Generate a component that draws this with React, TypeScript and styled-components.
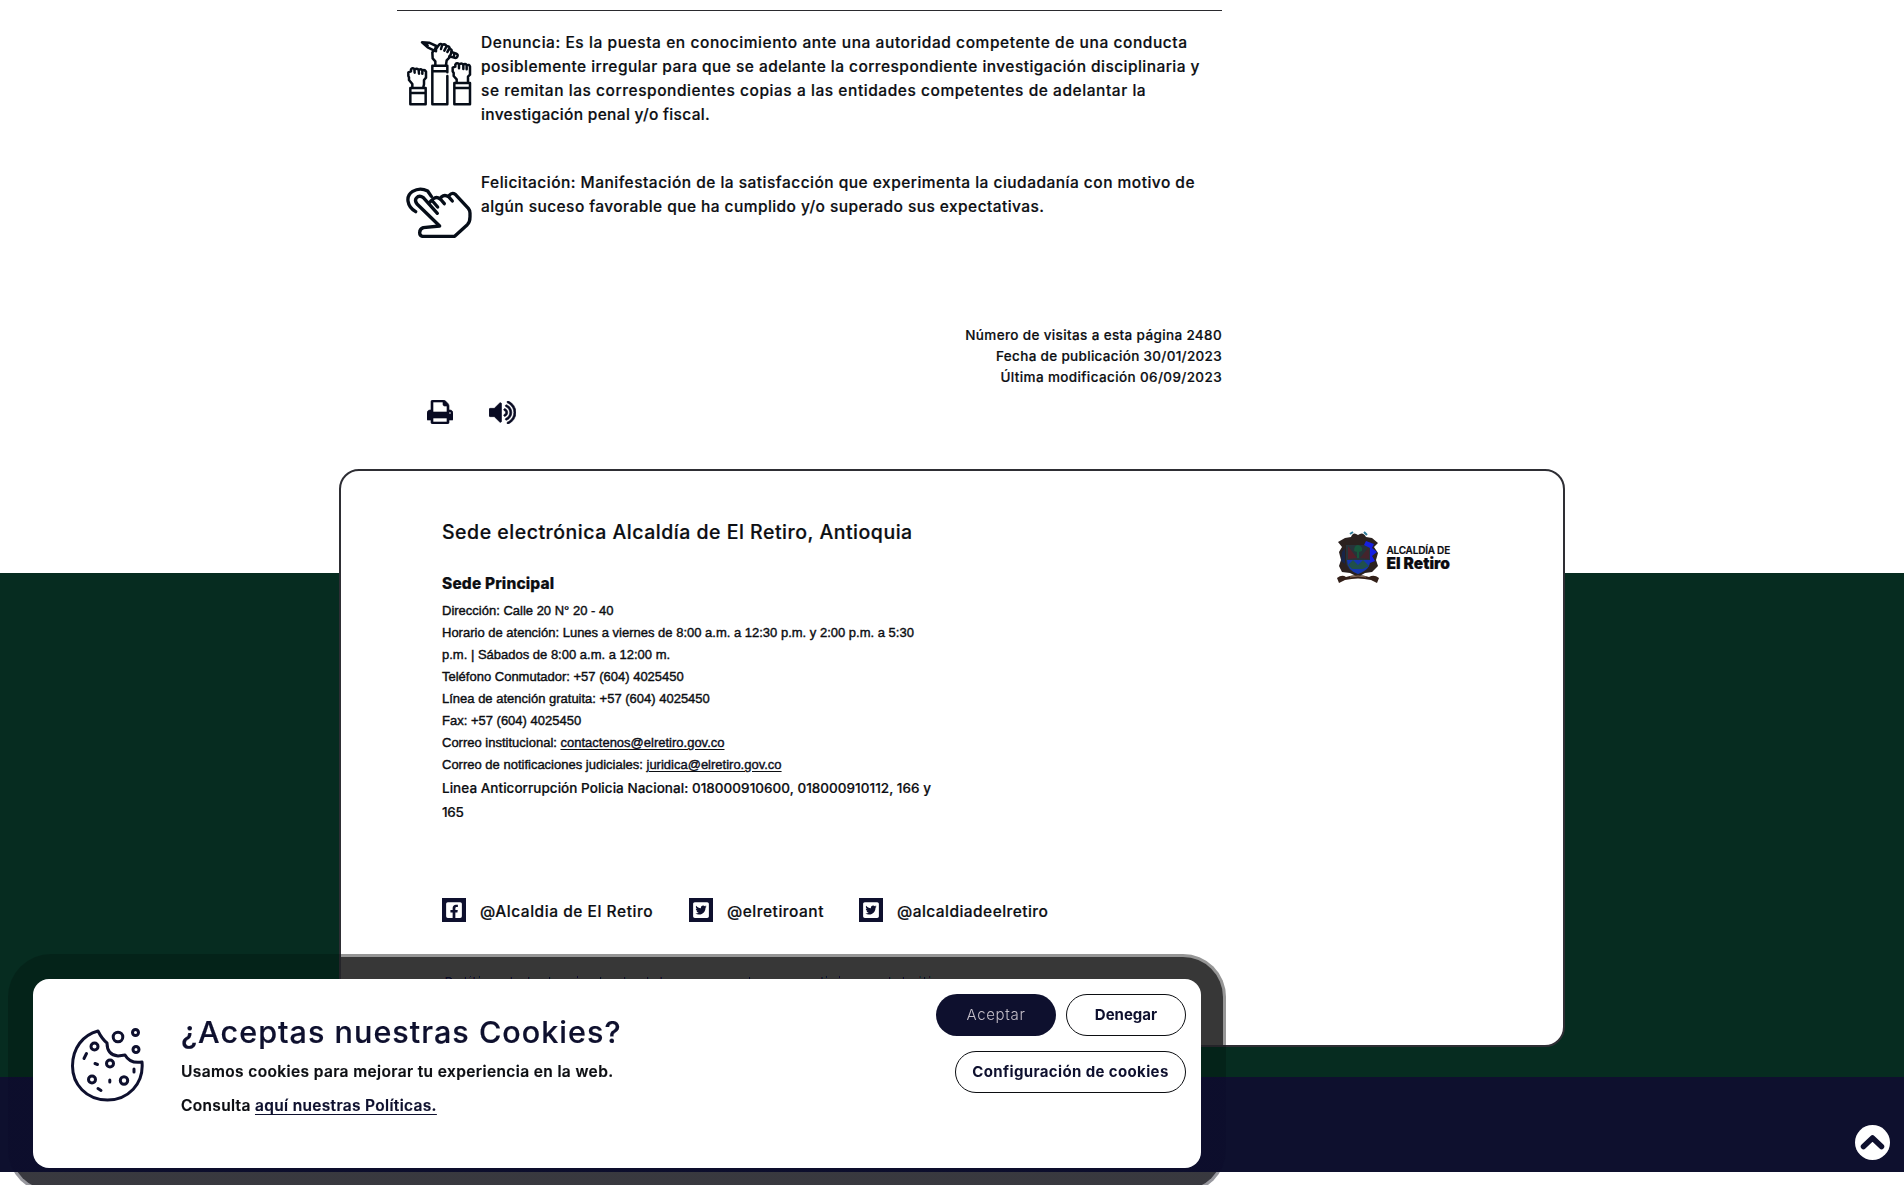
import React from "react";
import styled, { createGlobalStyle } from "styled-components";
import { FaFacebookSquare, FaTwitterSquare } from "react-icons/fa";

const navy = "#0e102e";
const ink = "#0c0e12";
const green = "#062c20";

const GlobalStyle = createGlobalStyle`
  *, *::before, *::after { box-sizing: border-box; }
  body {
    margin: 0;
    background: #fff;
    color: ${ink};
    font-family: Inter, "Liberation Sans", sans-serif;
    overflow: hidden;
  }
`;

const Page = styled.div`
  display: flex;
  flex-direction: column;
  height: 1185px;
`;

const Content = styled.main`
  display: flex;
  flex-direction: column;
  width: 825px;
  height: 469px;
  margin-left: 397px;
  padding-top: 10px;
`;

const Line = styled.span<{ $track?: number }>`
  display: block;
  white-space: pre;
  letter-spacing: ${(p) => p.$track ?? 0}px;
  -webkit-text-stroke: 0.2px currentColor;
`;

const Definition = styled.section<{ $gap: number }>`
  display: grid;
  grid-template-columns: 84px 1fr;
  margin-top: ${(p) => p.$gap}px;
`;

const Rule = styled.hr`
  width: 100%;
  height: 1px;
  flex: none;
  margin: 0;
  border: 0;
  background: #2a2a2e;
`;

const DefinitionText = styled.p`
  margin: 0;
  font-size: 15.5px;
  font-weight: 500;
  line-height: 24px;
`;

const HandsIcon = styled.svg`
  width: 80px;
  height: 84px;
  margin: -1px 0 0 3px;
  fill: none;
  stroke: #060d18;
  stroke-width: 7.5;
  stroke-linejoin: round;
  stroke-linecap: round;
`;

const TapIcon = styled(HandsIcon)`
  width: 68px;
  height: 53px;
  margin: 15px 0 0 8px;
  stroke-width: 10;
`;

const Meta = styled.div`
  margin-top: 86px;
  font-size: 13.5px;
  font-weight: 500;
  line-height: 21px;
  text-align: right;
`;

const Tools = styled.div`
  display: flex;
  align-items: center;
  gap: 36px;
  margin: 12px 0 0 30px;
  height: 24px;
  color: #080a22;

  svg {
    stroke: currentColor;
    stroke-width: 40;
  }
`;

const Footer = styled.footer`
  display: flex;
  flex-direction: column;
  height: 703px;
  background: linear-gradient(#fff 104px, ${green} 104px 608px, ${navy} 608px);
`;

const Card = styled.section`
  display: flex;
  justify-content: space-between;
  width: 1226px;
  height: 578px;
  margin-left: 339px;
  padding: 46px 112px 0 101px;
  border: 2px solid #2e2e34;
  border-radius: 20px;
  background: #fff;
`;

const CardMain = styled.div`
  display: flex;
  flex-direction: column;
`;

const CardTitle = styled.h2`
  margin: 0;
  font-size: 19.5px;
  font-weight: 500;
  line-height: 30px;
`;

const Branch = styled.h3`
  margin: 25px 0 4px;
  font-size: 15.5px;
  font-weight: 800;
  line-height: 24px;
`;

const Address = styled.address`
  font: 400 13px/22px "Liberation Sans", Arial, sans-serif;

  ${Line} {
    -webkit-text-stroke: 0.4px ${ink};
  }
`;

const MailLink = styled.a`
  color: ${navy};
  text-decoration: underline;
  text-underline-offset: 2px;
`;

const Hotline = styled.p`
  margin: 0;
  font-size: 13.5px;
  font-weight: 500;
  line-height: 24px;
`;

const SocialRow = styled.nav`
  display: grid;
  grid-template-columns: 247px 170px auto;
  margin-top: 74px;
`;

const SocialItem = styled.div`
  display: flex;
  align-items: center;
  gap: 14px;
  height: 24px;
  font-size: 15.5px;
  font-weight: 500;
  line-height: 20px;

  ${Line} {
    padding-top: 4px;
  }
`;

const SocialBadge = styled.span`
  display: flex;
  align-items: center;
  justify-content: center;
  width: 24px;
  height: 24px;
  background: ${navy};
  color: #fff;
`;

const PolicyLink = styled.p`
  margin: 51px 0 0 2px;
  font-size: 15px;
  font-weight: 600;
  line-height: 20px;
  color: ${navy};
`;

const Brand = styled.div`
  display: flex;
  align-items: flex-start;
  gap: 6px;
  height: 54px;
  margin: 13px 1px 0 0;
`;

const BrandName = styled.div`
  padding-top: 13px;
  color: #0b0b10;
`;

const BrandTop = styled(Line)`
  font-size: 10px;
  font-weight: 600;
  line-height: 14px;
`;

const BrandBottom = styled(Line)`
  margin-top: -3px;
  font-size: 15.5px;
  font-weight: 900;
  line-height: 19px;
`;

const Banner = styled.div`
  position: fixed;
  left: 33px;
  top: 979px;
  z-index: 3;
  display: flex;
  width: 1168px;
  height: 189px;
  padding: 15px 15px 0 38px;
  border-radius: 16px;
  background: #fff;
`;

const BannerShade = styled.div`
  position: fixed;
  left: 11px;
  top: 957px;
  z-index: 1;
  width: 1212px;
  height: 233px;
  border-radius: 40px;
  background: #454545;
  box-shadow: 0 0 0 3px #bcbcbc;
  mix-blend-mode: darken;
`;

const BannerTint = styled.div`
  position: fixed;
  left: 8px;
  top: 954px;
  z-index: 2;
  width: 1218px;
  height: 239px;
  border-radius: 43px;
  background: linear-gradient(rgba(0, 0, 0, 0.2) 123px, rgba(8, 8, 40, 0.2) 123px);
`;

const CookieIcon = styled.svg`
  flex: none;
  width: 76px;
  height: 76px;
  margin: 33px 36px 0 -2px;
  fill: none;
  stroke: ${navy};
  stroke-width: 3;
  stroke-linecap: round;
  stroke-linejoin: round;
`;

const BannerBody = styled.div`
  flex: 1;
  padding-top: 18px;
  font-size: 15.5px;
  font-weight: 600;
`;

const BannerTitle = styled.h2`
  margin: 0;
  color: ${navy};
  font-size: 30.5px;
  font-weight: 500;
  line-height: 40px;
`;

const BannerLine = styled.p<{ $gap: number }>`
  margin: ${(p) => p.$gap}px 0 0;
  line-height: 32px;
`;

const PolicyAnchor = styled.a`
  color: ${navy};
  text-decoration: underline;
  text-underline-offset: 3px;
`;

const Actions = styled.div`
  display: flex;
  flex-wrap: wrap;
  align-content: flex-start;
  justify-content: flex-end;
  gap: 15px 10px;
  width: 256px;
`;

const Pill = styled.button<{ $primary?: boolean; $width: number; $track: number }>`
  width: ${(p) => p.$width}px;
  height: 42px;
  padding: 0 0 1px;
  border: ${(p) => (p.$primary ? "0" : `1px solid ${ink}`)};
  border-radius: 21px;
  background: ${(p) => (p.$primary ? navy : "#fff")};
  color: ${(p) => (p.$primary ? "#c4bec8" : navy)};
  font-family: inherit;
  font-size: 15px;
  font-weight: ${(p) => (p.$primary ? 300 : 700)};
  letter-spacing: ${(p) => p.$track}px;
`;

const ScrollTop = styled.button`
  position: fixed;
  left: 1854.5px;
  top: 1124.5px;
  display: flex;
  align-items: center;
  justify-content: center;
  width: 35px;
  height: 35px;
  padding: 0;
  border: 0;
  border-radius: 50%;
  background: #fff;
`;

const Hands = () => (
  <HandsIcon viewBox="0 0 240 252">
    <path d="M31 174H77V223H31ZM31 189H77" />
    <path d="M37 172V162L27 150V142L25 138V127L33 124V118Q37 112 43 117L44 128M44 119Q51 113 56 120L57 131M57 120Q63 115 67 121V131M67 122Q74 118 78 125V143L72 150V163L70 172" />
    <path d="M97 107H142V127M142 138V223H97V107M97 124H142" />
    <path d="M106 105V94L98 85L97 67L103 61M108 64V57L116 46Q121 39 127 44L123 57M127 45Q134 40 140 48L133 62M140 50Q146 46 149 54L142 66M149 57Q158 58 154 68L148 83L140 91L138 105" />
    <path d="M66 37L87 38L109 48L103 62L83 52ZM69 39L83 46" />
    <path d="M154 66L169 71Q175 74 172 80Q169 86 162 83L148 79M163 72L161 81" />
    <path d="M163 159H210V223H163ZM163 174H210" />
    <path d="M170 157V148L161 138V129L158 124V113L166 110V104Q170 97 177 102V115M177 104Q184 97 190 104V117M190 105Q195 99 200 105V118M200 106Q208 102 210 110V134L204 140V157" />
  </HandsIcon>
);

const Tap = () => (
  <TapIcon viewBox="75 558 204 159">
    <path d="M107 635C80 619 76 588 98 574Q120 561 143 573L154 589" />
    <path d="M172 640L130 593Q118 584 109 594Q103 601 111 612L179 678L130 683Q119 687 119 698Q119 707 127 709H224L262 674Q270 666 270 650V639Q270 631 265 625L226 583Q216 576 208 586L205 590Q194 582 184 591L180 597Q170 588 160 596L150 606M160 606L173 621M181 597L193 611M205 589L217 603" />
  </TapIcon>
);

const Crest = () => (
  <svg width="44" height="54" viewBox="0 0 44 54">
    <path d="M15 7Q17 1 22 5Q27 1 30 7L36 8L42 13L38 17L42 23L40 30L42 36L36 42L29 43L22 47L14 43L6 42L3 36L5 30L3 22L6 17L2 12L9 8Z" fill="#2b211f" />
    <path d="M14 4L17 2M28 2L31 5" stroke="#2c7895" strokeWidth="2" />
    <path d="M10 15H34V31Q34 41 22 44Q10 40 10 31Z" fill="#26343a" />
    <path d="M12 16L21 28L12 29Z" fill="#54202a" />
    <path d="M24 28L33 17V29Z" fill="#44252c" />
    <path d="M22 15Q27 16 26 21L23 22V28H21V22L18 21Q18 15 22 15Z" fill="#17563c" />
    <path d="M11 30H34Q35 39 22 44Q11 40 11 30Z" fill="#1435b0" />
    <path d="M12 35L17 30L22 35L27 30L33 36L27 39H16Z" fill="#20504b" />
    <path d="M30 11L38 14L36 18L41 22L36 26L39 31L34 33V18L28 15Z" fill="#1620e0" />
    <path d="M6 22L9 18V34L5 31Z" fill="#172447" />
    <path d="M1 48Q6 44 10 47Q22 43 33 47Q38 44 43 48L41 53L35 50Q22 47 9 50L3 53Z" fill="#332019" />
    <path d="M14 47Q22 45 30 47" stroke="#8b6f5c" fill="none" />
  </svg>
);

const Cookie = () => (
  <CookieIcon viewBox="69 1027 76 76">
    <path d="M98 1031Q102 1039 107 1043Q107 1055 118 1056L125 1055Q130 1064 142 1062C144 1084 128 1100 107.500 1100C86 1100 72.500 1084 72.500 1066C72.500 1048 83 1035 98 1031Z" />
    <circle cx="94.500" cy="1046.500" r="3.500" />
    <circle cx="110" cy="1063.500" r="3.500" />
    <circle cx="92" cy="1079.500" r="3.500" />
    <circle cx="124" cy="1080.500" r="3.700" />
    <circle cx="118" cy="1037" r="4.800" />
    <circle cx="135.500" cy="1032.500" r="3" />
    <circle cx="136" cy="1049.500" r="3" />
    <path d="M86.500 1053.500L84 1058.500M95 1063.500L97.500 1064.500M134 1069V1072M109.800 1080V1082M98 1088.500L101 1090.500" />
  </CookieIcon>
);

const Printer = () => (
  <svg width="26" height="24" viewBox="0 128 1664 1536" fill="currentColor">
    <path d="M384 1536h896v-256h-896v256zM384 896h896v-384h-160q-40 0-68-28t-28-68v-160h-640v640zM1536 960q0-26-19-45t-45-19-45 19-19 45 19 45 45 19 45-19 19-45zm128 0v416q0 13-9.500 22.500t-22.500 9.500h-224v160q0 40-28 68t-68 28h-960q-40 0-68-28t-28-68v-160h-224q-13 0-22.500-9.500t-9.500-22.500v-416q0-79 56.500-135.500t135.500-56.500h64v-544q0-40 28-68t68-28h672q40 0 88 20t76 48l152 152q28 28 48 76t20 88v256h64q79 0 135.500 56.500t56.500 135.500z" />
  </svg>
);

const Speaker = () => (
  <svg width="27" height="23" viewBox="64 184 1664 1424" fill="currentColor">
    <path d="M832 352v1088q0 26-19 45t-45 19-45-19l-333-333h-262q-26 0-45-19t-19-45v-384q0-26 19-45t45-19h262l333-333q19-19 45-19t45 19 19 45zm384 544q0 76-42.500 141.500t-112.500 93.500q-10 5-25 5-26 0-45-18.500t-19-45.500q0-21 12-35.500t29-25 34-23 29-36 12-56.500-12-56.500-29-36-34-23-29-25-12-35.500q0-27 19-45.500t45-18.500q15 0 25 5 70 27 112.500 93t42.500 142zm256 0q0 153-85 282.500t-225 188.500q-13 5-25 5-27 0-46-19t-19-45q0-39 39-59 56-29 76-44 74-54 115.500-135.500t41.500-173.500-41.500-173.500-115.500-135.500q-20-15-76-44-39-20-39-59 0-26 19-45t45-19q13 0 26 5 140 59 225 188.500t85 282.500zm256 0q0 230-127 422.500t-338 283.500q-13 5-26 5-26 0-45-19t-19-45q0-36 39-59 7-4 22.500-10.500t22.500-10.500q46-25 82-51 123-91 192-227t69-289-69-289-192-227q-36-26-82-51-7-4-22.500-10.500t-22.500-10.500q-39-23-39-59 0-26 19-45t45-19q13 0 26 5 211 91 338 283.500t127 422.500z" />
  </svg>
);

export default function App() {
  return (
    <>
      <GlobalStyle />
      <Page>
        <Content>
          <Rule />
          <Definition $gap={20}>
            <Hands />
            <DefinitionText>
              <Line $track={0.57}>Denuncia: Es la puesta en conocimiento ante una autoridad competente de una conducta</Line>
              <Line $track={0.45}>posiblemente irregular para que se adelante la correspondiente investigación disciplinaria y</Line>
              <Line $track={0.55}>se remitan las correspondientes copias a las entidades competentes de adelantar la</Line>
              <Line $track={0.32}>investigación penal y/o fiscal.</Line>
            </DefinitionText>
          </Definition>
          <Definition $gap={44}>
            <Tap />
            <DefinitionText>
              <Line $track={0.48}>Felicitación: Manifestación de la satisfacción que experimenta la ciudadanía con motivo de</Line>
              <Line $track={0.43}>algún suceso favorable que ha cumplido y/o superado sus expectativas.</Line>
            </DefinitionText>
          </Definition>
          <Meta>
            <Line $track={0.36}>Número de visitas a esta página 2480</Line>
            <Line $track={0.32}>Fecha de publicación 30/01/2023</Line>
            <Line $track={0.38}>Última modificación 06/09/2023</Line>
          </Meta>
          <Tools>
            <Printer />
            <Speaker />
          </Tools>
        </Content>
        <Footer>
          <Card>
            <CardMain>
              <CardTitle>
                <Line $track={0.51}>Sede electrónica Alcaldía de El Retiro, Antioquia</Line>
              </CardTitle>
              <Branch>
                <Line $track={0.15}>Sede Principal</Line>
              </Branch>
              <Address>
                <Line>Dirección: Calle 20 N° 20 - 40</Line>
                <Line>Horario de atención: Lunes a viernes de 8:00 a.m. a 12:30 p.m. y 2:00 p.m. a 5:30</Line>
                <Line>p.m. | Sábados de 8:00 a.m. a 12:00 m.</Line>
                <Line>Teléfono Conmutador: +57 (604) 4025450</Line>
                <Line>Línea de atención gratuita: +57 (604) 4025450</Line>
                <Line>Fax: +57 (604) 4025450</Line>
                <Line>Correo institucional: <MailLink>contactenos@elretiro.gov.co</MailLink></Line>
                <Line>Correo de notificaciones judiciales: <MailLink>juridica@elretiro.gov.co</MailLink></Line>
              </Address>
              <Hotline>
                <Line $track={0.04}>Linea Anticorrupción Policia Nacional: 018000910600, 018000910112, 166 y</Line>
                <Line $track={-0.3}>165</Line>
              </Hotline>
              <SocialRow>
                <SocialItem>
                  <SocialBadge><FaFacebookSquare size={18} /></SocialBadge>
                  <Line $track={0.54}>@Alcaldia de El Retiro</Line>
                </SocialItem>
                <SocialItem>
                  <SocialBadge><FaTwitterSquare size={18} /></SocialBadge>
                  <Line $track={0.51}>@elretiroant</Line>
                </SocialItem>
                <SocialItem>
                  <SocialBadge><FaTwitterSquare size={18} /></SocialBadge>
                  <Line $track={0.45}>@alcaldiadeelretiro</Line>
                </SocialItem>
              </SocialRow>
              <PolicyLink>
                <Line $track={0.29}>Política de tratamiento de datos personales y condiciones del sitio</Line>
              </PolicyLink>
            </CardMain>
            <Brand>
              <Crest />
              <BrandName>
                <BrandTop $track={-0.2}>ALCALDÍA DE</BrandTop>
                <BrandBottom $track={0}>El Retiro</BrandBottom>
              </BrandName>
            </Brand>
          </Card>
        </Footer>
        <ScrollTop aria-label="Subir">
          <svg width="25" height="17" viewBox="0 0 25 17" fill="none" stroke={navy} strokeWidth="5.500" strokeLinecap="round" strokeLinejoin="round">
            <path d="M3.500 12.500L12.500 4L21.500 12.500" />
          </svg>
        </ScrollTop>
      </Page>
      <BannerShade />
      <BannerTint />
      <Banner>
        <Cookie />
        <BannerBody>
          <BannerTitle>
            <Line $track={1.04}>¿Aceptas nuestras Cookies?</Line>
          </BannerTitle>
          <BannerLine $gap={4}>
            <Line $track={0.38}>Usamos cookies para mejorar tu experiencia en la web.</Line>
          </BannerLine>
          <BannerLine $gap={2}>
            <Line $track={0.33}>Consulta <PolicyAnchor>aquí nuestras Políticas.</PolicyAnchor></Line>
          </BannerLine>
        </BannerBody>
        <Actions>
          <Pill $primary $width={120} $track={0.665}>Aceptar</Pill>
          <Pill $width={120} $track={0}>Denegar</Pill>
          <Pill $width={231} $track={0.37}>Configuración de cookies</Pill>
        </Actions>
      </Banner>
    </>
  );
}
